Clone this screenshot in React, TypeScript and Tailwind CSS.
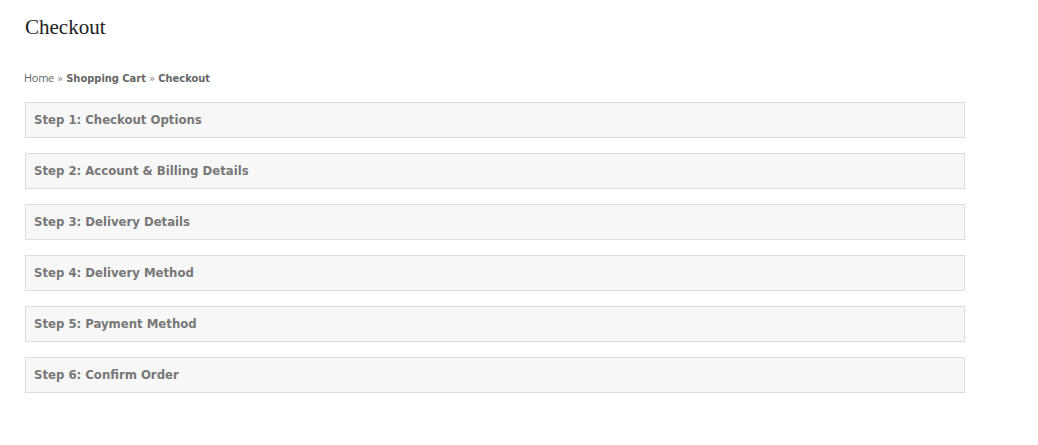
import React from 'react';

const steps = [
  'Step 1: Checkout Options',
  'Step 2: Account & Billing Details',
  'Step 3: Delivery Details',
  'Step 4: Delivery Method',
  'Step 5: Payment Method',
  'Step 6: Confirm Order',
];

const App: React.FC = () => {
  return (
    <div className="min-h-[445px] bg-white pl-[24px] pr-[73px] pt-[14px] font-['Tahoma','DejaVu_Sans_Condensed','DejaVu_Sans',sans-serif]">
      <h1 className="ml-px font-['Liberation_Serif',serif] text-[21px] leading-[26px] text-[#222]">Checkout</h1>

      <div className="mt-[31px] text-[11px] leading-[14px] text-[#666]">
        <span className="font-['Open_Sans','DejaVu_Sans_Condensed',sans-serif] tracking-[-0.3px]">Home</span>
        <span className="text-[#888]"> » </span>
        <span className="font-bold text-[#666]">Shopping Cart</span>
        <span className="text-[#888]"> » </span>
        <span className="font-bold text-[#666]">Checkout</span>
      </div>

      <div className="mt-[16px] ml-px flex flex-col gap-[15px]">
        {steps.map((step) => (
          <div key={step} className="flex h-[36px] items-center border border-[#dddddd] bg-[#f7f7f7] px-[8px]">
            <span className="text-[13px] font-bold text-[#777]">{step}</span>
          </div>
        ))}
      </div>
    </div>
  );
};

export default App;
